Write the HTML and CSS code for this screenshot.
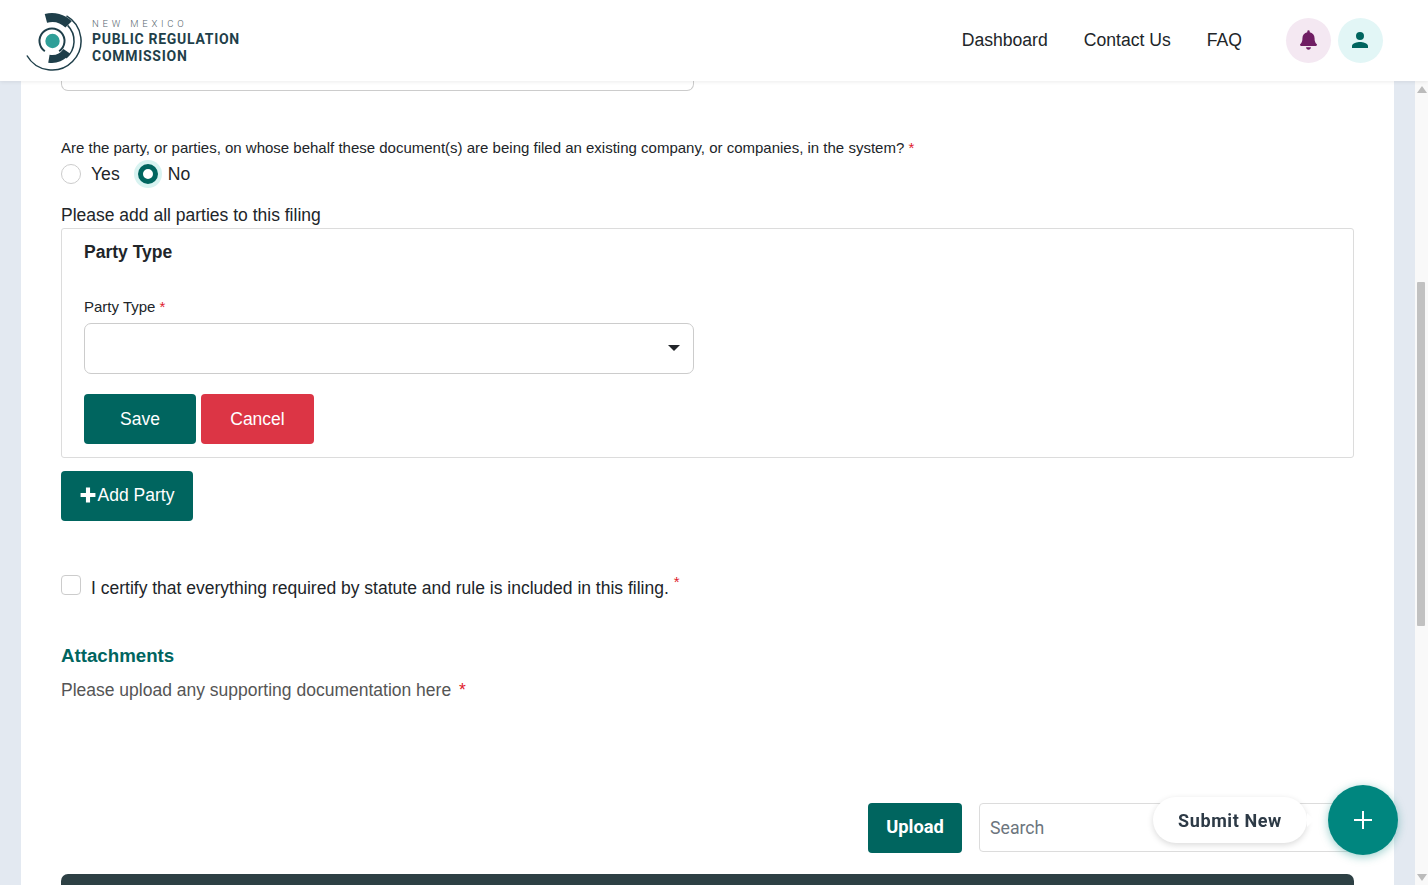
FILE: index.html
```html
<!DOCTYPE html>
<html lang="en">
<head>
<meta charset="utf-8">
<title>New Mexico Public Regulation Commission</title>
<link rel="stylesheet" href="styles.css">
</head>
<body>
<header class="topbar">
  <div class="brand">
    <svg class="logo" viewBox="0 0 60 60" width="60" height="60" aria-hidden="true">
      <g fill="none" stroke="#1f3f4a">
        <path d="M20.900 7.300A23.500 23.500 0 0 1 43.600 13.400" stroke-width="9"/>
        <path d="M41.700 40.300A18 18 0 0 1 23.900 47.700" stroke-width="8"/>
        <path d="M41.500 4.900A29 29 0 1 1 1.900 44.500" stroke-width="1.500"/>
        <path d="M42.600 14.400A22 22 0 0 1 41.100 46.900" stroke-width="1.500"/>
        <path d="M19.830 40.240A12.500 12.500 0 1 1 34.170 40.240" stroke-width="2"/>
      </g>
      <circle cx="27.500" cy="30" r="7.200" fill="#2f9f98"/>
    </svg>
    <div class="brand-text">
      <div class="brand-state">NEW MEXICO</div>
      <div class="brand-name">PUBLIC REGULATION</div>
      <div class="brand-name">COMMISSION</div>
    </div>
  </div>
  <nav class="nav">
    <a href="#">Dashboard</a>
    <a href="#">Contact Us</a>
    <a href="#">FAQ</a>
  </nav>
  <div class="actions">
    <span class="circle circle-bell">
      <svg viewBox="0 0 448 512" width="17" height="20" aria-hidden="true"><path fill="#6f1d63" d="M224 512c35 0 64-29 64-64H160c0 35 29 64 64 64zm215-150c-19-21-55-52-55-154 0-78-54-140-128-155V32a32 32 0 1 0-64 0v21C118 68 64 130 64 208c0 102-36 133-55 154-6 6-9 14-9 22 0 16 13 32 32 32h384c19 0 32-16 32-32 0-8-3-16-9-22z"/></svg>
    </span>
    <span class="circle circle-user">
      <svg viewBox="0 0 24 24" width="24" height="24" aria-hidden="true"><path fill="#00655f" d="M12 12a4 4 0 1 0 0-8 4 4 0 0 0 0 8zm0 2c-2.700 0-8 1.340-8 4v2h16v-2c0-2.660-5.300-4-8-4z"/></svg>
    </span>
  </div>
</header>

<div class="shell">
  <main class="card">
    <div class="stub"></div>

    <p class="question">Are the party, or parties, on whose behalf these document(s) are being filed an existing company, or companies, in the system? <span class="req">*</span></p>
    <div class="radios">
      <span class="radio"></span><span class="radio-label">Yes</span>
      <span class="radio radio-on"></span><span class="radio-label">No</span>
    </div>

    <p class="add-note">Please add all parties to this filing</p>
    <section class="party">
      <h3>Party Type</h3>
      <label class="field-label">Party Type <span class="req">*</span></label>
      <div class="select"><span class="caret"></span></div>
      <div class="btn-row">
        <button class="btn btn-save">Save</button>
        <button class="btn btn-cancel">Cancel</button>
      </div>
    </section>
    <button class="btn btn-add"><svg viewBox="0 0 14 14" width="16" height="16" aria-hidden="true"><path fill="#fff" d="M5.200 0.500h3.600v4.700h4.700v3.600H8.800v4.700H5.200V8.800H0.500V5.200h4.700z"/></svg>Add Party</button>

    <div class="certify">
      <span class="checkbox"></span>
      <span class="certify-text">I certify that everything required by statute and rule is included in this filing. <sup class="req">*</sup></span>
    </div>

    <h2 class="attach-title">Attachments</h2>
    <p class="attach-note">Please upload any supporting documentation here <span class="req attach-star">*</span></p>

    <div class="tools">
      <button class="btn btn-upload">Upload</button>
      <div class="search">Search</div>
    </div>
    <div class="table-head"></div>
  </main>
  <div class="gutter"></div>
  <aside class="scrollbar">
    <span class="arrow arrow-up"></span>
    <span class="track"><span class="thumb"></span></span>
    <span class="arrow arrow-down"></span>
  </aside>
</div>

<div class="fab-wrap">
  <span class="fab-label">Submit New</span>
  <span class="fab"><svg viewBox="0 0 20 20" width="20" height="20" aria-hidden="true"><path d="M10 1v18M1 10h18" stroke="#fff" stroke-width="2" fill="none"/></svg></span>
</div>
</body>
</html>
```
FILE: styles.css
```css
* { box-sizing: border-box; }
html, body { margin: 0; height: 100%; overflow: hidden; }
body { font-family: "Liberation Sans", Arial, sans-serif; color: #212529; background: #fff; }
p, h2, h3 { margin: 0; }
.req { color: #e0202c; }

.topbar { height: 81px; display: flex; align-items: center; padding: 0 45px 0 25px; background: #fff; box-shadow: 0 1px 4px rgba(0,0,0,.08); position: relative; z-index: 2; }
.brand { display: flex; align-items: center; gap: 7px; flex: 1; }
.logo { display: block; }
.brand-text { color: #1f3f4a; font-family: "Roboto", sans-serif; }
.brand-state { font-size: 9.500px; letter-spacing: 3.800px; line-height: 14px; color: #55666c; font-weight: 300; }
.brand-name { font-size: 14px; font-weight: 700; letter-spacing: .72px; line-height: 17px; }
.nav { display: flex; gap: 36px; margin-right: 44px; }
.nav a { color: #212529; font-size: 17.600px; line-height: 20px; text-decoration: none; margin-top: -2px; }
.actions { display: flex; gap: 7px; }
.circle { width: 45px; height: 45px; border-radius: 50%; display: flex; align-items: center; justify-content: center; padding: 0 1px 2px 0; }
.circle-bell { background: #f4e8f2; }
.circle-user { background: #e2f6f6; }

.shell { display: flex; height: 804px; background: #e3e9f1; padding-left: 21px; }
.card { width: 1373px; background: #fff; padding: 0 40px; overflow: hidden; }
.gutter { width: 21px; }
.stub { width: 633px; height: 10px; border: 1px solid #ccc; border-top: 0; border-radius: 0 0 7px 7px; }
.question { margin-top: 48px; font-size: 15px; line-height: 18px; }
.radios { display: flex; align-items: center; height: 26px; margin-top: 4px; }
.radio { width: 20px; height: 20px; border-radius: 50%; border: 1px solid #ccc; background: #fff; }
.radio-on { border: 5px solid #00655f; box-shadow: 0 0 0 4px #d8f3f1; margin-left: 1px; }
.radio-label { font-size: 17.600px; line-height: 24px; margin-bottom: 1px; margin-left: 10px; margin-right: 17px; }
.add-note { margin-top: 17px; font-size: 17.500px; line-height: 22px; }
.party { margin-top: 2px; width: 1293px; height: 230px; border: 1px solid #dcdcdc; border-radius: 3px; padding: 12px 22px 0; }
.party h3 { font-size: 17.500px; line-height: 22px; font-weight: 700; }
.field-label { display: block; margin-top: 35px; font-size: 15px; line-height: 18px; }
.select { position: relative; margin-top: 7px; width: 610px; height: 51px; border: 1px solid #ccc; border-radius: 7px; background: #fff; }
.caret { position: absolute; right: 13px; top: 21px; border: 6px solid transparent; border-top-color: #212529; border-bottom: 0; }
.btn { border: 0; border-radius: 4px; color: #fff; font-family: "Liberation Sans", Arial, sans-serif; font-size: 17.500px; height: 50px; padding: 0; }
.btn-row { display: flex; gap: 5px; margin-top: 20px; }
.btn-save { width: 112px; background: #00655f; }
.btn-cancel { width: 113px; background: #dc3545; }
.btn-add { margin-top: 13px; width: 132px; padding-bottom: 2px; background: #00655f; display: flex; align-items: center; justify-content: center; gap: 2px; }
.certify { display: flex; align-items: flex-start; margin-top: 54px; }
.checkbox { width: 20px; height: 20px; border: 1px solid #ccc; border-radius: 4px; background: #fff; }
.certify-text { margin-left: 10px; font-size: 17.500px; line-height: 26px; }
.certify-text sup { font-size: 15px; line-height: 0; }
.attach-title { margin-top: 43px; font-size: 18.700px; line-height: 24px; font-weight: 700; color: #00655f; }
.attach-note { margin-top: 11px; font-size: 17.500px; line-height: 22px; color: #555; }
.attach-star { margin-left: 3px; }
.tools { display: flex; justify-content: flex-end; gap: 17px; margin-top: 102px; width: 1293px; }
.btn-upload { width: 94px; padding-bottom: 3px; background: #00655f; font-weight: 700; font-family: "Roboto", sans-serif; font-size: 18.300px; }
.search { width: 375px; height: 49px; border: 1px solid #dcdcdc; border-radius: 4px; padding: 0 10px; font-size: 17.700px; line-height: 49px; color: #6c757d; font-family: "Roboto", sans-serif; }
.table-head { margin-top: 21px; width: 1293px; height: 40px; background: #2d4044; border-radius: 7px 7px 0 0; }

.scrollbar { width: 13px; background: #f9f9f9; display: flex; flex-direction: column; align-items: center; }
.arrow { width: 0; height: 0; border: 5px solid transparent; }
.arrow-up { margin-top: 5px; border-top: 0; border-bottom: 7px solid #bbb; }
.arrow-down { margin-bottom: 4px; border-bottom: 0; border-top: 7px solid #bbb; }
.track { flex: 1; width: 100%; padding-top: 189px; }
.thumb { display: block; width: 8px; height: 344px; margin-left: 2px; background: #c1c1c1; border-radius: 1px; }

.fab-wrap { position: fixed; left: 1153px; top: 785px; width: 245px; height: 70px; display: flex; align-items: center; justify-content: space-between; }
.fab-label { position: relative; width: 154px; height: 46px; border-radius: 23px; background: #fff; box-shadow: 0 2px 6px rgba(0,0,0,.15); font-family: "Roboto", sans-serif; font-weight: 700; font-size: 18px; letter-spacing: .6px; line-height: 48px; text-align: center; color: #2d3a46; }
.fab-label::after { content: ""; position: absolute; right: -7px; top: 16px; border: 7px solid transparent; border-left-color: #fff; border-right: 0; }
.fab { width: 70px; height: 70px; border-radius: 50%; background: #00867f; box-shadow: 0 2px 10px rgba(0,134,127,.4); display: flex; align-items: center; justify-content: center; }
```
